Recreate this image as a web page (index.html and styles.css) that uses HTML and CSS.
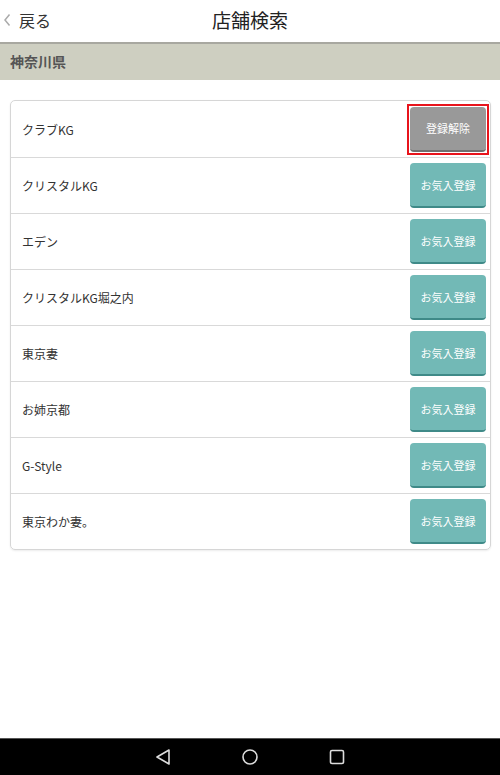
FILE: index.html
```html
<!DOCTYPE html>
<html lang="ja">
<head>
    <meta charset="utf-8" />
    <meta name="viewport" content="width=device-width, initial-scale=1" />
    <title>店舗検索</title>
    <link rel="stylesheet" href="styles.css">
</head>
<body>
    <div class="screen">
        <header class="topbar">
            <a class="back" href="#">
                <svg class="chev" width="8" height="14" viewBox="0 0 8 14"><path d="M6.5 1.5 L2 7 L6.5 12.5" fill="none" stroke="#aaa" stroke-width="1.5"/></svg>
                戻る
            </a>
            <h1 class="title">店舗検索</h1>
        </header>
        <div class="area">神奈川県</div>

        <main class="content">
            <ul class="shops">
                <li class="shop"><span class="name">クラブKG</span><span class="selected"><button class="fav off">登録解除</button></span></li>
                <li class="shop"><span class="name">クリスタルKG</span><button class="fav">お気入登録</button></li>
                <li class="shop"><span class="name">エデン</span><button class="fav">お気入登録</button></li>
                <li class="shop"><span class="name">クリスタルKG堀之内</span><button class="fav">お気入登録</button></li>
                <li class="shop"><span class="name">東京妻</span><button class="fav">お気入登録</button></li>
                <li class="shop"><span class="name">お姉京都</span><button class="fav">お気入登録</button></li>
                <li class="shop"><span class="name">G-Style</span><button class="fav">お気入登録</button></li>
                <li class="shop"><span class="name">東京わか妻。</span><button class="fav">お気入登録</button></li>
            </ul>
        </main>

        <nav class="navbar">
            <svg width="18" height="18" viewBox="0 0 18 18"><path d="M15 2 L3 9 L15 16 Z" fill="none" stroke="#ddd" stroke-width="1.6" stroke-linejoin="round"/></svg>
            <svg width="18" height="18" viewBox="0 0 18 18"><circle cx="9" cy="9" r="7" fill="none" stroke="#ddd" stroke-width="1.6"/></svg>
            <svg width="18" height="18" viewBox="0 0 18 18"><rect x="2.5" y="2.5" width="13" height="13" rx="1.5" fill="none" stroke="#ddd" stroke-width="1.6"/></svg>
        </nav>
    </div>
</body>
</html>
```

FILE: styles.css
```css
body {
    margin: 0;
    background-color: #fff;
    font-family: "Noto Sans CJK JP", "Noto Sans", sans-serif;
    color: #333;
}

.screen {
    display: flex;
    flex-direction: column;
    height: 100vh;
}

.topbar {
    position: relative;
    display: flex;
    align-items: center;
    justify-content: center;
    border-bottom: 2px solid #a8a8a0;
    box-sizing: border-box;
    height: 44px;
}

.back {
    position: absolute;
    left: 3px;
    top: 8px;
    font-size: 16px;
    color: #333;
    text-decoration: none;
    display: flex;
    align-items: center;
}

.chev {
    margin-right: 8px;
}

.title {
    margin: 0;
    margin-top: -4px;
    font-size: 19px;
    font-weight: normal;
    color: #222;
}

.area {
    height: 36px;
    line-height: 34px;
    background-color: #cecfc1;
    padding-left: 10px;
    font-size: 14px;
    font-weight: bold;
    color: #555;
}

.content {
    flex: 1;
    padding: 20px 9px 0 10px;
}

.shops {
    list-style: none;
    margin: 0;
    padding: 0;
    border: 1px solid #d6d6d6;
    border-radius: 5px;
    box-shadow: 0 1px 2px rgba(0, 0, 0, 0.08);
}

.shop {
    display: flex;
    align-items: center;
    justify-content: space-between;
    height: 56px;
    box-sizing: border-box;
    padding: 0 4px 0 11px;
    border-top: 1px solid #d9d9d9;
}

.shop:first-child {
    border-top: none;
}

.name {
    font-size: 12px;
    color: #333;
}

.fav {
    width: 76px;
    height: 45px;
    border: none;
    border-bottom: 2px solid #3f8a88;
    border-radius: 4px;
    background-color: #72b9b6;
    color: #fff;
    font-family: inherit;
    font-size: 11px;
    padding: 0;
    cursor: pointer;
    display: block;
}

.fav.off {
    background-color: #999;
    border-bottom-color: #707070;
}

/* red frame around the tapped button */
.selected {
    border: 2px solid #e8141c;
    padding: 1px;
    margin: -3px;
}

.navbar {
    height: 36px;
    background-color: #000;
    border-top: 1px solid #555;
    display: flex;
    justify-content: center;
    align-items: center;
    gap: 69px;
}
```
